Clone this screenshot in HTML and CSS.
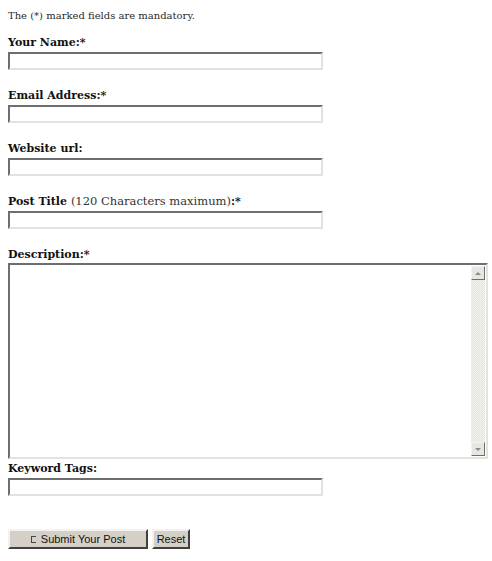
FILE: index.html
```html
<!DOCTYPE html>
<html>
<head>
<meta charset="utf-8">
<link rel="stylesheet" href="styles.css">
</head>
<body>
<form class="post-form">
  <p class="intro">The (*) marked fields are mandatory.</p>
  <div class="field">
    <label class="lbl">Your Name:*</label>
    <input class="txt" type="text">
  </div>
  <div class="field">
    <label class="lbl">Email Address:*</label>
    <input class="txt" type="text">
  </div>
  <div class="field">
    <label class="lbl">Website url:</label>
    <input class="txt" type="text">
  </div>
  <div class="field">
    <label class="lbl">Post Title <span class="note">(120 Characters maximum)</span>:*</label>
    <input class="txt" type="text">
  </div>
  <div class="field field-desc">
    <label class="lbl lbl-desc">Description:*</label>
    <div class="area">
      <textarea class="area-input"></textarea>
      <div class="sbar">
        <div class="sbtn"><span class="tri-up"></span></div>
        <div class="strack"></div>
        <div class="sbtn"><span class="tri-down"></span></div>
      </div>
    </div>
  </div>
  <div class="field">
    <label class="lbl">Keyword Tags:</label>
    <input class="txt" type="text">
  </div>
  <div class="actions">
    <button class="btn btn-submit" type="button"><span class="glyph"></span>Submit Your Post</button>
    <button class="btn btn-reset" type="button">Reset</button>
  </div>
</form>
</body>
</html>
```

FILE: styles.css
```css
html, body {
  margin: 0;
  padding: 0;
  background: #fff;
}
body {
  padding: 8px;
  font-family: "DejaVu Serif", "Liberation Serif", serif;
  font-size: 10px;
  color: #222;
}
.post-form {
  display: flex;
  flex-direction: column;
}
.intro {
  margin: 0 0 10px 0;
  height: 16px;
  line-height: 16px;
  color: #2a2a2a;
}
.field {
  display: flex;
  flex-direction: column;
  align-items: flex-start;
  margin-bottom: 17px;
}
.field-desc {
  margin-bottom: 1px;
}
.lbl {
  display: block;
  height: 16px;
  font-weight: bold;
  line-height: 18px;
  margin-bottom: 2px;
  color: #111;
  font-size: 11px;
  white-space: nowrap;
}
.lbl-desc {
  margin-bottom: 1px;
}
.note {
  font-weight: normal;
  font-size: 11.5px;
  line-height: 16px;
  color: #333;
}
.txt {
  box-sizing: border-box;
  width: 315px;
  height: 18px;
  margin: 0;
  padding: 0 2px;
  border-style: solid;
  border-width: 2px;
  border-color: #6e6e6e #e4e2dc #e4e2dc #6e6e6e;
  background: #fff;
  outline: none;
}
.area {
  box-sizing: border-box;
  width: 480px;
  height: 196px;
  display: flex;
  border-style: solid;
  border-width: 2px;
  border-color: #6e6e6e #e4e2dc #e4e2dc #6e6e6e;
  background: #fff;
}
.area-input {
  flex: 1;
  border: none;
  outline: none;
  resize: none;
  margin: 0;
  padding: 2px;
  background: transparent;
}
.sbar {
  width: 14px;
  display: flex;
  flex-direction: column;
  margin: 1px 1px 1px 0;
}
.sbtn {
  box-sizing: border-box;
  height: 14px;
  background: #e8e6e0;
  border-style: solid;
  border-width: 1px;
  border-color: #f4f3ef #6e6e6e #6e6e6e #f4f3ef;
  display: flex;
  align-items: center;
  justify-content: center;
}
.strack {
  flex: 1;
  background: repeating-conic-gradient(#f6f5f2 0 25%, #e2e0da 0 50%) 0 0 / 2px 2px;
}
.tri-up {
  width: 0;
  height: 0;
  border-left: 3px solid transparent;
  border-right: 3px solid transparent;
  border-bottom: 3px solid #8a8a8a;
}
.tri-down {
  width: 0;
  height: 0;
  border-left: 3px solid transparent;
  border-right: 3px solid transparent;
  border-top: 3px solid #8a8a8a;
}
.actions {
  display: flex;
  gap: 4px;
  margin-top: 16px;
}
.btn {
  box-sizing: border-box;
  height: 20px;
  margin: 0;
  padding: 0 6px;
  background: #d4d0c8;
  border-style: solid;
  border-width: 2px;
  border-color: #f4f2ee #404040 #404040 #f4f2ee;
  font-family: "Liberation Sans", Arial, sans-serif;
  font-size: 11px;
  color: #111;
  display: flex;
  align-items: center;
  justify-content: center;
}
.btn-submit {
  width: 140px;
}
.btn-reset {
  width: 38px;
  padding: 0;
}
.glyph {
  display: inline-block;
  box-sizing: border-box;
  width: 5px;
  height: 7px;
  border: 1px solid #444;
  border-right: none;
  margin-right: 5px;
}
```
